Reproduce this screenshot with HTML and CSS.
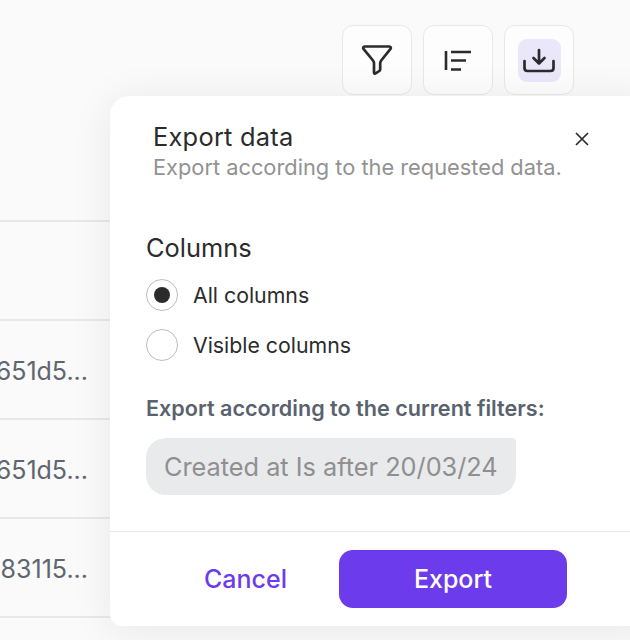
FILE: index.html
```html
<!DOCTYPE html>
<html lang="en">
<head>
<meta charset="utf-8">
<title>Export data</title>
<link rel="stylesheet" href="styles.css">
</head>
<body>
<div class="page">
  <div class="toolbar">
    <button class="tool" aria-label="Filter">
      <svg class="icon" width="32" height="32" viewBox="0 0 32 32" fill="none"><path d="M3.600 2.500h24.800c1.300 0 1.900 1.400 1.100 2.400L20.200 16.500c-.7.900-1 1.600-1 2.600v6.100c0 .8-.3 1.400-1 1.800l-3.600 2.400c-.9.500-1.600.1-1.600-1V19.100c0-1-.3-1.700-1-2.600L2.500 4.900C1.700 3.900 2.300 2.500 3.600 2.500z" stroke="#2b2b2b" stroke-width="2.700" stroke-linejoin="round"/></svg>
    </button>
    <button class="tool" aria-label="Sort">
      <svg class="icon" width="32" height="32" viewBox="0 0 32 32" fill="none"><path d="M4 7v19M9 8h20M9 16.500h15M9 25.500h10" stroke="#2b2b2b" stroke-width="2.600"/></svg>
    </button>
    <button class="tool" aria-label="Download">
      <span class="tile">
        <svg class="icon" width="32" height="32" viewBox="0 0 32 32" fill="none"><path d="M16 6v13M10.500 14l5.500 5.500 5.500-5.500M1.500 17v7c0 2 1 3 3 3h23c2 0 3-1 3-3v-7" stroke="#2b2b2b" stroke-width="2.700" stroke-linecap="round" stroke-linejoin="round"/></svg>
      </span>
    </button>
  </div>
  <div class="table">
    <div class="row"></div>
    <div class="row"><span class="cell">651d5...</span></div>
    <div class="row"><span class="cell">651d5...</span></div>
    <div class="row"><span class="cell">83115...</span></div>
  </div>
  <section class="dialog">
    <header class="head">
      <div>
        <h2 class="title">Export data</h2>
        <p class="sub">Export according to the requested data.</p>
      </div>
      <svg class="close" width="14" height="14" viewBox="0 0 14 14" fill="none"><path d="M1 1l12 12M13 1L1 13" stroke="#2b2b2b" stroke-width="1.700"/></svg>
    </header>
    <div class="body">
      <h3 class="group">Columns</h3>
      <label class="radio"><span class="dot on"></span>All columns</label>
      <label class="radio"><span class="dot"></span>Visible columns</label>
      <p class="note">Export according to the current filters:</p>
      <div class="chip">Created at Is after 20/03/24</div>
    </div>
    <footer class="foot">
      <button class="cancel">Cancel</button>
      <button class="export">Export</button>
    </footer>
  </section>
</div>
</body>
</html>
```
FILE: styles.css
```css
* { box-sizing: border-box; }
html, body { margin: 0; height: 100%; }
body { font-family: Inter, "Liberation Sans", sans-serif; color: #2b2b2b; overflow: hidden; }
.page { position: relative; width: 630px; height: 640px; background: #fafafa; overflow: hidden; }
.toolbar { display: flex; justify-content: flex-end; gap: 11px; padding: 25px 56px 0 0; height: 220px; }
.tool { width: 70px; height: 70px; padding: 0; display: flex; align-items: center; justify-content: center; background: #fdfdfd; border: 1px solid #e8e8e8; border-radius: 11px; }
.tile { width: 43px; height: 43px; display: flex; align-items: center; justify-content: center; background: #ebe7fb; border-radius: 9px; }
.icon { display: block; }
.table { border-bottom: 2px solid #e8e8e8; }
.row { height: 99px; border-top: 2px solid #e8e8e8; display: flex; align-items: center; }
.cell { flex: none; width: 96px; margin-left: -8px; padding-top: 2px; font-size: 25px; color: #5f6670; white-space: nowrap; text-align: right; }
.dialog { position: absolute; left: 110px; top: 96px; width: 540px; height: 530px; background: #fff; border-radius: 20px 0 0 12px; box-shadow: 0 4px 40px rgba(0, 0, 0, .08); display: flex; flex-direction: column; }
.head { display: flex; justify-content: space-between; width: 520px; padding: 27px 41px 0 43px; }
.title { margin: 0; font-size: 25.400px; letter-spacing: .25px; line-height: 28px; font-weight: 400; color: #2b2b2b; }
.sub { margin: 4px 0 0; font-size: 21.800px; line-height: 24px; white-space: nowrap; color: #929292; }
.close { margin-top: 9px; }
.body { flex: 1; padding: 0 0 0 36px; }
.group { margin: 55px 0 0; font-size: 25.400px; line-height: 28px; font-weight: 400; }
.radio { display: flex; align-items: center; gap: 15px; height: 34px; margin-top: 16px; font-size: 21.300px; }
.dot { flex: none; width: 32px; height: 32px; border: 1px solid #bdbdbd; border-radius: 50%; display: flex; align-items: center; justify-content: center; }
.dot.on::after { content: ""; width: 16px; height: 16px; border-radius: 50%; background: #2b2b2b; }
.note { margin: 33px 0 0; font-size: 21.600px; line-height: 26px; font-weight: 600; color: #5a636d; white-space: nowrap; }
.chip { display: inline-block; margin-top: 17px; height: 57px; line-height: 57px; padding: 0 18px; background: #e9eaec; border-radius: 20px 4px 20px 20px; font-size: 25.300px; color: #8f8f8f; white-space: nowrap; }
.foot { height: 95px; width: 520px; border-top: 1px solid #e8e8e8; display: flex; align-items: flex-start; gap: 52px; padding: 18px 63px 0 0; justify-content: flex-end; }
.cancel { height: 58px; padding: 0; background: none; border: 0; font: 500 25px Inter, sans-serif; color: #6c3bec; }
.export { width: 228px; height: 58px; padding: 0; background: #6c3bec; border: 0; border-radius: 14px; font: 500 25px Inter, sans-serif; color: #fff; }
```
